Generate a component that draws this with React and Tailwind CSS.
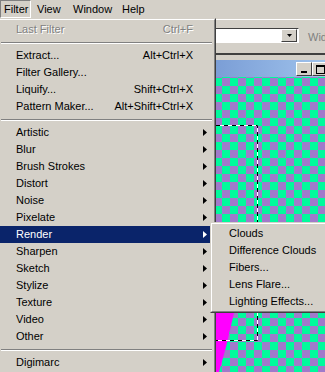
import React from 'react'

const MENU = [
  { label: 'Last Filter', sc: 'Ctrl+F', disabled: true },
  'sep',
  { label: 'Extract...', sc: 'Alt+Ctrl+X' },
  { label: 'Filter Gallery...' },
  { label: 'Liquify...', sc: 'Shift+Ctrl+X' },
  { label: 'Pattern Maker...', sc: 'Alt+Shift+Ctrl+X' },
  'sep',
  { label: 'Artistic', sub: true },
  { label: 'Blur', sub: true },
  { label: 'Brush Strokes', sub: true },
  { label: 'Distort', sub: true },
  { label: 'Noise', sub: true },
  { label: 'Pixelate', sub: true },
  { label: 'Render', sub: true, active: true },
  { label: 'Sharpen', sub: true },
  { label: 'Sketch', sub: true },
  { label: 'Stylize', sub: true },
  { label: 'Texture', sub: true },
  { label: 'Video', sub: true },
  { label: 'Other', sub: true },
  'sep',
  { label: 'Digimarc', sub: true },
]

const RENDER = ['Clouds', 'Difference Clouds', 'Fibers...', 'Lens Flare...', 'Lighting Effects...']

function Arrow({ white }) {
  return (
    <svg width="4" height="7" viewBox="0 0 4 7" className="block">
      <polygon points="0,0 4,3.5 0,7" fill={white ? '#fff' : '#000'} />
    </svg>
  )
}

function Separator() {
  return (
    <div className="h-[9px] flex flex-col justify-center px-[1px]">
      <div className="h-px bg-[#808080]" />
      <div className="h-px bg-white" />
    </div>
  )
}

function MenuRow({ item }) {
  return (
    <div className={`h-[17px] flex items-center pl-4 ${item.active ? 'bg-[#0A246A] text-white' : ''}`}>
      <span className={`flex-1 whitespace-nowrap ${item.disabled ? 'text-[#808080] [text-shadow:1px_1px_0_#fff]' : ''}`}>
        {item.label}
      </span>
      {item.sc && (
        <span className={`whitespace-nowrap ${item.disabled ? 'text-[#808080] [text-shadow:1px_1px_0_#fff]' : ''}`}>{item.sc}</span>
      )}
      <div className="w-[20px] pl-[10px] flex items-center">{item.sub && <Arrow white={item.active} />}</div>
    </div>
  )
}

function TitleButton({ children }) {
  return (
    <div className="w-[16px] h-[14px] bg-[#D4D0C8] border border-t-white border-l-white border-r-[#404040] border-b-[#404040] flex items-center justify-center">
      {children}
    </div>
  )
}

export default function App() {
  return (
    <div className="relative w-[325px] h-[372px] overflow-hidden bg-[#D4D0C8] text-[11px] text-black font-['Liberation_Sans',Arial,sans-serif] flex flex-col">
      {/* menu bar */}
      <div className="h-[20px] shrink-0 border-b border-white flex items-start">
        <div className="w-[31px] h-[18px] pl-[3px] flex items-center border border-t-[#808080] border-l-[#808080] border-r-white border-b-white">Filter</div>
        <div className="w-[36px] h-[18px] pl-[6px] flex items-center">View</div>
        <div className="w-[49px] h-[18px] pl-[6px] flex items-center">Window</div>
        <div className="h-[18px] pl-[6px] flex items-center">Help</div>
      </div>

      {/* options bar */}
      <div className="h-[35px] shrink-0 border-b-2 border-[#404040] flex items-start pt-[8px] pl-[170px]">
        <div className="w-[129px] h-[15px] shrink-0 bg-white border border-t-[#404040] border-l-[#404040] border-r-white border-b-white flex justify-end items-start pr-[1px]">
          <div className="w-[16px] h-[13px] bg-[#D4D0C8] border border-t-white border-l-white border-r-[#404040] border-b-[#404040] flex items-center justify-center">
            <svg width="5" height="3" viewBox="0 0 5 3"><polygon points="0,0 5,0 2.5,3" fill="#000" /></svg>
          </div>
        </div>
        <span className="ml-[9px] mt-[1px] text-[#808080] whitespace-nowrap">Width:</span>
      </div>

      {/* document window */}
      <div className="flex-1 pt-[5px] pl-[216px]">
        <div className="w-[140px] h-[17px] bg-gradient-to-r from-[#7b9ed6] to-[#aacdf2] flex items-start pt-[2px] pl-[80px]">
          <TitleButton>
            <div className="w-[6px] h-[2px] bg-black mt-[6px]" />
          </TitleButton>
          <TitleButton>
            <div className="w-[9px] h-[9px] border border-t-2 border-black" />
          </TitleButton>
        </div>
        <svg width="120" height="300" className="block">
          <defs>
            <pattern id="chk" x="-2" y="1" width="16" height="16" patternUnits="userSpaceOnUse">
              <rect width="16" height="16" fill="#A07ACA" />
              <rect width="8" height="8" fill="#00FA9C" />
              <rect x="8" y="8" width="8" height="8" fill="#00FA9C" />
            </pattern>
          </defs>
          <rect width="120" height="300" fill="url(#chk)" />
          <polygon points="0,215 19,215 18,236 14,253 10,270 5,288 3,295 0,295" fill="#FF00FF" />
          <path d="M0 48.5 H41.5 V263.5 H0" fill="none" stroke="#fff" strokeWidth="1" />
          <path d="M0 48.5 H41.5 V263.5 H0" fill="none" stroke="#000" strokeWidth="1" strokeDasharray="4 4" />
        </svg>
      </div>

      {/* Filter menu */}
      <div className="absolute left-[-3px] top-[18px] w-[219px] border border-t-[#D4D0C8] border-l-[#D4D0C8] border-r-[#404040] border-b-[#404040] bg-[#D4D0C8]">
        <div className="border border-t-white border-l-white border-r-[#808080] border-b-[#808080] p-[1px]">
          {MENU.map((item, i) => (item === 'sep' ? <Separator key={i} /> : <MenuRow key={i} item={item} />))}
        </div>
      </div>

      {/* Render submenu */}
      <div className="absolute left-[210px] top-[222px] w-[135px] border border-t-[#D4D0C8] border-l-[#D4D0C8] border-r-[#404040] border-b-[#404040] bg-[#D4D0C8]">
        <div className="border border-t-white border-l-white border-r-[#808080] border-b-[#808080] p-[1px]">
          {RENDER.map(label => (
            <div key={label} className="h-[17px] flex items-center pl-4 whitespace-nowrap">{label}</div>
          ))}
        </div>
      </div>
    </div>
  )
}
